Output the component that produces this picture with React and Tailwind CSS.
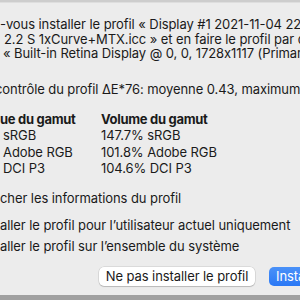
export default function App() {
  const gamut = [
    ["sRGB", "147.7% sRGB"],
    ["Adobe RGB", "101.8% Adobe RGB"],
    ["DCI P3", "104.6% DCI P3"],
  ];

  return (
    <div className="w-[300px] h-[300px] overflow-hidden bg-[#ececec] flex flex-col text-[13px] tracking-[-0.08px] text-[#1a1a1a] font-['Inter','Liberation_Sans',sans-serif]">
      {/* title bar edge */}
      <div className="h-[3px] shrink-0 bg-[#cdcdcd] border-b border-[#dedede]" />

      {/* question */}
      <div className="mt-[14px] leading-[14.5px] whitespace-nowrap">
        <div>-vous installer le profil « Display #1 2021-11-04 22-53 2.2 F-S 1xCurve</div>
        <div className="ml-[4px]">2.2 S 1xCurve+MTX.icc » et en faire le profil par défaut pour</div>
        <div className="ml-[3px]">« Built-in Retina Display @ 0, 0, 1728x1117 (Primary) » ?</div>
      </div>

      {/* self check */}
      <div className="mt-[21px] leading-[15px] whitespace-nowrap -ml-[5px]">
        contrôle du profil ΔE*76: moyenne 0.43, maximum 1.21
      </div>

      {/* gamut table */}
      <div className="mt-[14px] grid grid-cols-[101px_1fr] leading-[16.5px] whitespace-nowrap">
        <div className="font-bold tracking-[-0.3px]">ue du gamut</div>
        <div className="font-bold tracking-[-0.3px]">Volume du gamut</div>
        {gamut.map(([a, b]) => (
          <div key={a} className="contents">
            <div className="pl-[3px]">{a}</div>
            <div>{b}</div>
          </div>
        ))}
      </div>

      {/* options */}
      <div className="mt-[14px] leading-[15px] whitespace-nowrap">cher les informations du profil</div>
      <div className="mt-[12px] leading-[15px] whitespace-nowrap">aller le profil pour l’utilisateur actuel uniquement</div>
      <div className="mt-[6px] leading-[15px] whitespace-nowrap">aller le profil sur l’ensemble du système</div>

      {/* buttons */}
      <div className="mt-[13px] flex items-center gap-[14px] pl-[99px] whitespace-nowrap">
        <button className="w-[156px] h-[19px] shrink-0 rounded-[5px] bg-white shadow-[0_0_0_0.5px_rgba(0,0,0,0.15),0_1px_1px_rgba(0,0,0,0.15)] leading-[19px] text-[13px] text-[#1a1a1a]">
          Ne pas installer le profil
        </button>
        <button className="w-[90px] h-[19px] shrink-0 rounded-[5px] bg-gradient-to-b from-[#4a91f8] to-[#2a78f5] leading-[19px] text-[13px] text-white text-left pl-[7px]">
          Installer
        </button>
      </div>

      <div className="flex-1" />
      <div className="h-[5px] shrink-0 bg-[#a0a0a0]" />
    </div>
  );
}
